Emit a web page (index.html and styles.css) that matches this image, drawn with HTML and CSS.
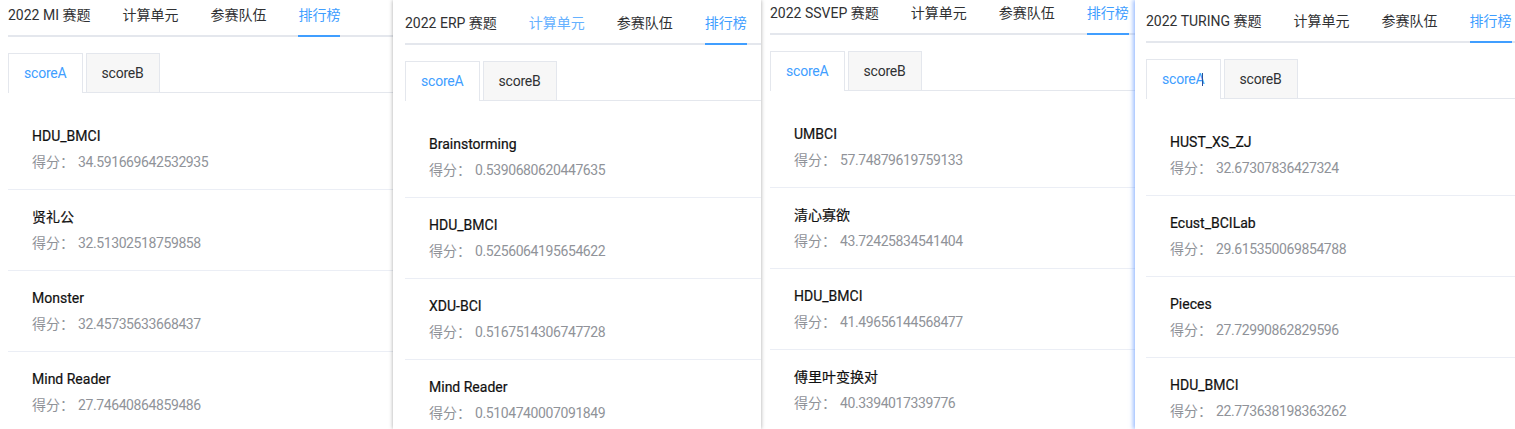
FILE: index.html
```html
<!DOCTYPE html>
<html lang="zh-CN">
<head>
<meta charset="utf-8">
<title>排行榜</title>
<link rel="stylesheet" href="styles.css">
</head>
<body>
<div class="strip">
  <section class="panel p1">
    <nav class="nav">
      <span class="nav-item">2022 MI 赛题</span>
      <span class="nav-item">计算单元</span>
      <span class="nav-item">参赛队伍</span>
      <span class="nav-item active">排行榜</span>
    </nav>
    <div class="tabs">
      <span class="tab active">scoreA</span>
      <span class="tab">scoreB</span>
    </div>
    <ul class="list">
      <li class="item"><div class="name">HDU_BMCI</div><div class="score">得分：<span class="val">34.591669642532935</span></div></li>
      <li class="item"><div class="name">贤礼公</div><div class="score">得分：<span class="val">32.51302518759858</span></div></li>
      <li class="item"><div class="name">Monster</div><div class="score">得分：<span class="val">32.45735633668437</span></div></li>
      <li class="item"><div class="name">Mind Reader</div><div class="score">得分：<span class="val">27.74640864859486</span></div></li>
    </ul>
  </section>
  <section class="panel p2">
    <nav class="nav">
      <span class="nav-item">2022 ERP 赛题</span>
      <span class="nav-item hover">计算单元</span>
      <span class="nav-item">参赛队伍</span>
      <span class="nav-item active">排行榜</span>
    </nav>
    <div class="tabs">
      <span class="tab active">scoreA</span>
      <span class="tab">scoreB</span>
    </div>
    <ul class="list">
      <li class="item"><div class="name">Brainstorming</div><div class="score">得分：<span class="val">0.5390680620447635</span></div></li>
      <li class="item"><div class="name">HDU_BMCI</div><div class="score">得分：<span class="val">0.5256064195654622</span></div></li>
      <li class="item"><div class="name">XDU-BCI</div><div class="score">得分：<span class="val">0.5167514306747728</span></div></li>
      <li class="item"><div class="name">Mind Reader</div><div class="score">得分：<span class="val">0.5104740007091849</span></div></li>
    </ul>
  </section>
  <section class="panel p3">
    <nav class="nav">
      <span class="nav-item">2022 SSVEP 赛题</span>
      <span class="nav-item">计算单元</span>
      <span class="nav-item">参赛队伍</span>
      <span class="nav-item active">排行榜</span>
    </nav>
    <div class="tabs">
      <span class="tab active">scoreA</span>
      <span class="tab">scoreB</span>
    </div>
    <ul class="list">
      <li class="item"><div class="name">UMBCI</div><div class="score">得分：<span class="val">57.74879619759133</span></div></li>
      <li class="item"><div class="name">清心寡欲</div><div class="score">得分：<span class="val">43.72425834541404</span></div></li>
      <li class="item"><div class="name">HDU_BMCI</div><div class="score">得分：<span class="val">41.49656144568477</span></div></li>
      <li class="item"><div class="name">傅里叶变换对</div><div class="score">得分：<span class="val">40.3394017339776</span></div></li>
    </ul>
  </section>
  <section class="panel p4">
    <nav class="nav">
      <span class="nav-item">2022 TURING 赛题</span>
      <span class="nav-item">计算单元</span>
      <span class="nav-item">参赛队伍</span>
      <span class="nav-item active">排行榜</span>
    </nav>
    <div class="tabs">
      <span class="tab active">scoreA<span class="caret"></span></span>
      <span class="tab">scoreB</span>
    </div>
    <ul class="list">
      <li class="item"><div class="name">HUST_XS_ZJ</div><div class="score">得分：<span class="val">32.67307836427324</span></div></li>
      <li class="item"><div class="name">Ecust_BCILab</div><div class="score">得分：<span class="val">29.615350069854788</span></div></li>
      <li class="item"><div class="name">Pieces</div><div class="score">得分：<span class="val">27.72990862829596</span></div></li>
      <li class="item"><div class="name">HDU_BMCI</div><div class="score">得分：<span class="val">22.773638198363262</span></div></li>
    </ul>
  </section>
</div>
</body>
</html>
```

FILE: styles.css
```css
html, body {
  margin: 0;
  padding: 0;
  background: #fff;
}
body {
  font-family: Roboto, "Noto Sans CJK SC", sans-serif;
  font-size: 14px;
  color: #303133;
}
.strip {
  display: flex;
  width: 1515px;
  height: 429px;
  overflow: hidden;
}
.panel {
  flex: none;
  height: 429px;
  overflow: hidden;
  background: #fff;
  box-sizing: border-box;
}
.p1 { width: 393px; padding-left: 8px; }
.p2 { width: 368px; padding-left: 12px; position: relative; z-index: 2; box-shadow: 0 0 4px rgba(0,0,0,0.35); }
.p3 { width: 374px; padding-left: 9px; }
.p4 { width: 380px; padding-left: 11px; position: relative; z-index: 2; box-shadow: -2px 0 4px rgba(80,140,255,0.55); }

.p1 .nav { margin-top: -5px; }
.p2 .nav { margin-top: 3px; }
.p3 .nav { margin-top: -7px; }
.p4 .nav { margin-top: 1px; }

.nav {
  display: flex;
  gap: 32px;
  height: 40px;
  border-bottom: 2px solid #E4E7ED;
  box-sizing: content-box;
  white-space: nowrap;
}
.nav-item {
  height: 40px;
  line-height: 40px;
  border-bottom: 2px solid transparent;
  color: #303133;
}
.nav-item.active {
  color: #409EFF;
  border-bottom-color: #409EFF;
}
.nav-item.hover {
  color: #66b1ff;
}

.tabs {
  display: flex;
  align-items: flex-start;
  gap: 3px;
  margin-top: 16px;
  height: 39px;
  border-bottom: 1px solid #E4E7ED;
}
.tab {
  box-sizing: border-box;
  height: 39px;
  line-height: 38px;
  padding: 0 15px;
  border: 1px solid #E4E7ED;
  border-bottom: none;
  background: #f7f7f7;
  color: #303133;
  letter-spacing: -0.2px;
}
.tab.active {
  height: 40px;
  background: #fff;
  color: #409EFF;
  position: relative;
  z-index: 1;
}
.caret {
  display: inline-block;
  width: 0;
  height: 13px;
  border-left: 1px solid #2b4f9a;
  vertical-align: -2px;
  margin-left: -3px;
}

.list {
  list-style: none;
  margin: 16px 0 0;
  padding: 0;
}
.item {
  padding: 16px 24px;
  border-bottom: 1px solid #EBEEF5;
}
.name {
  line-height: 22px;
  font-weight: 400;
  color: #111;
  -webkit-text-stroke: 0.2px #111;
}
.score {
  margin-top: 4px;
  line-height: 22px;
  color: #909399;
}
.val {
  margin-left: 4px;
  letter-spacing: -0.4px;
}
```
